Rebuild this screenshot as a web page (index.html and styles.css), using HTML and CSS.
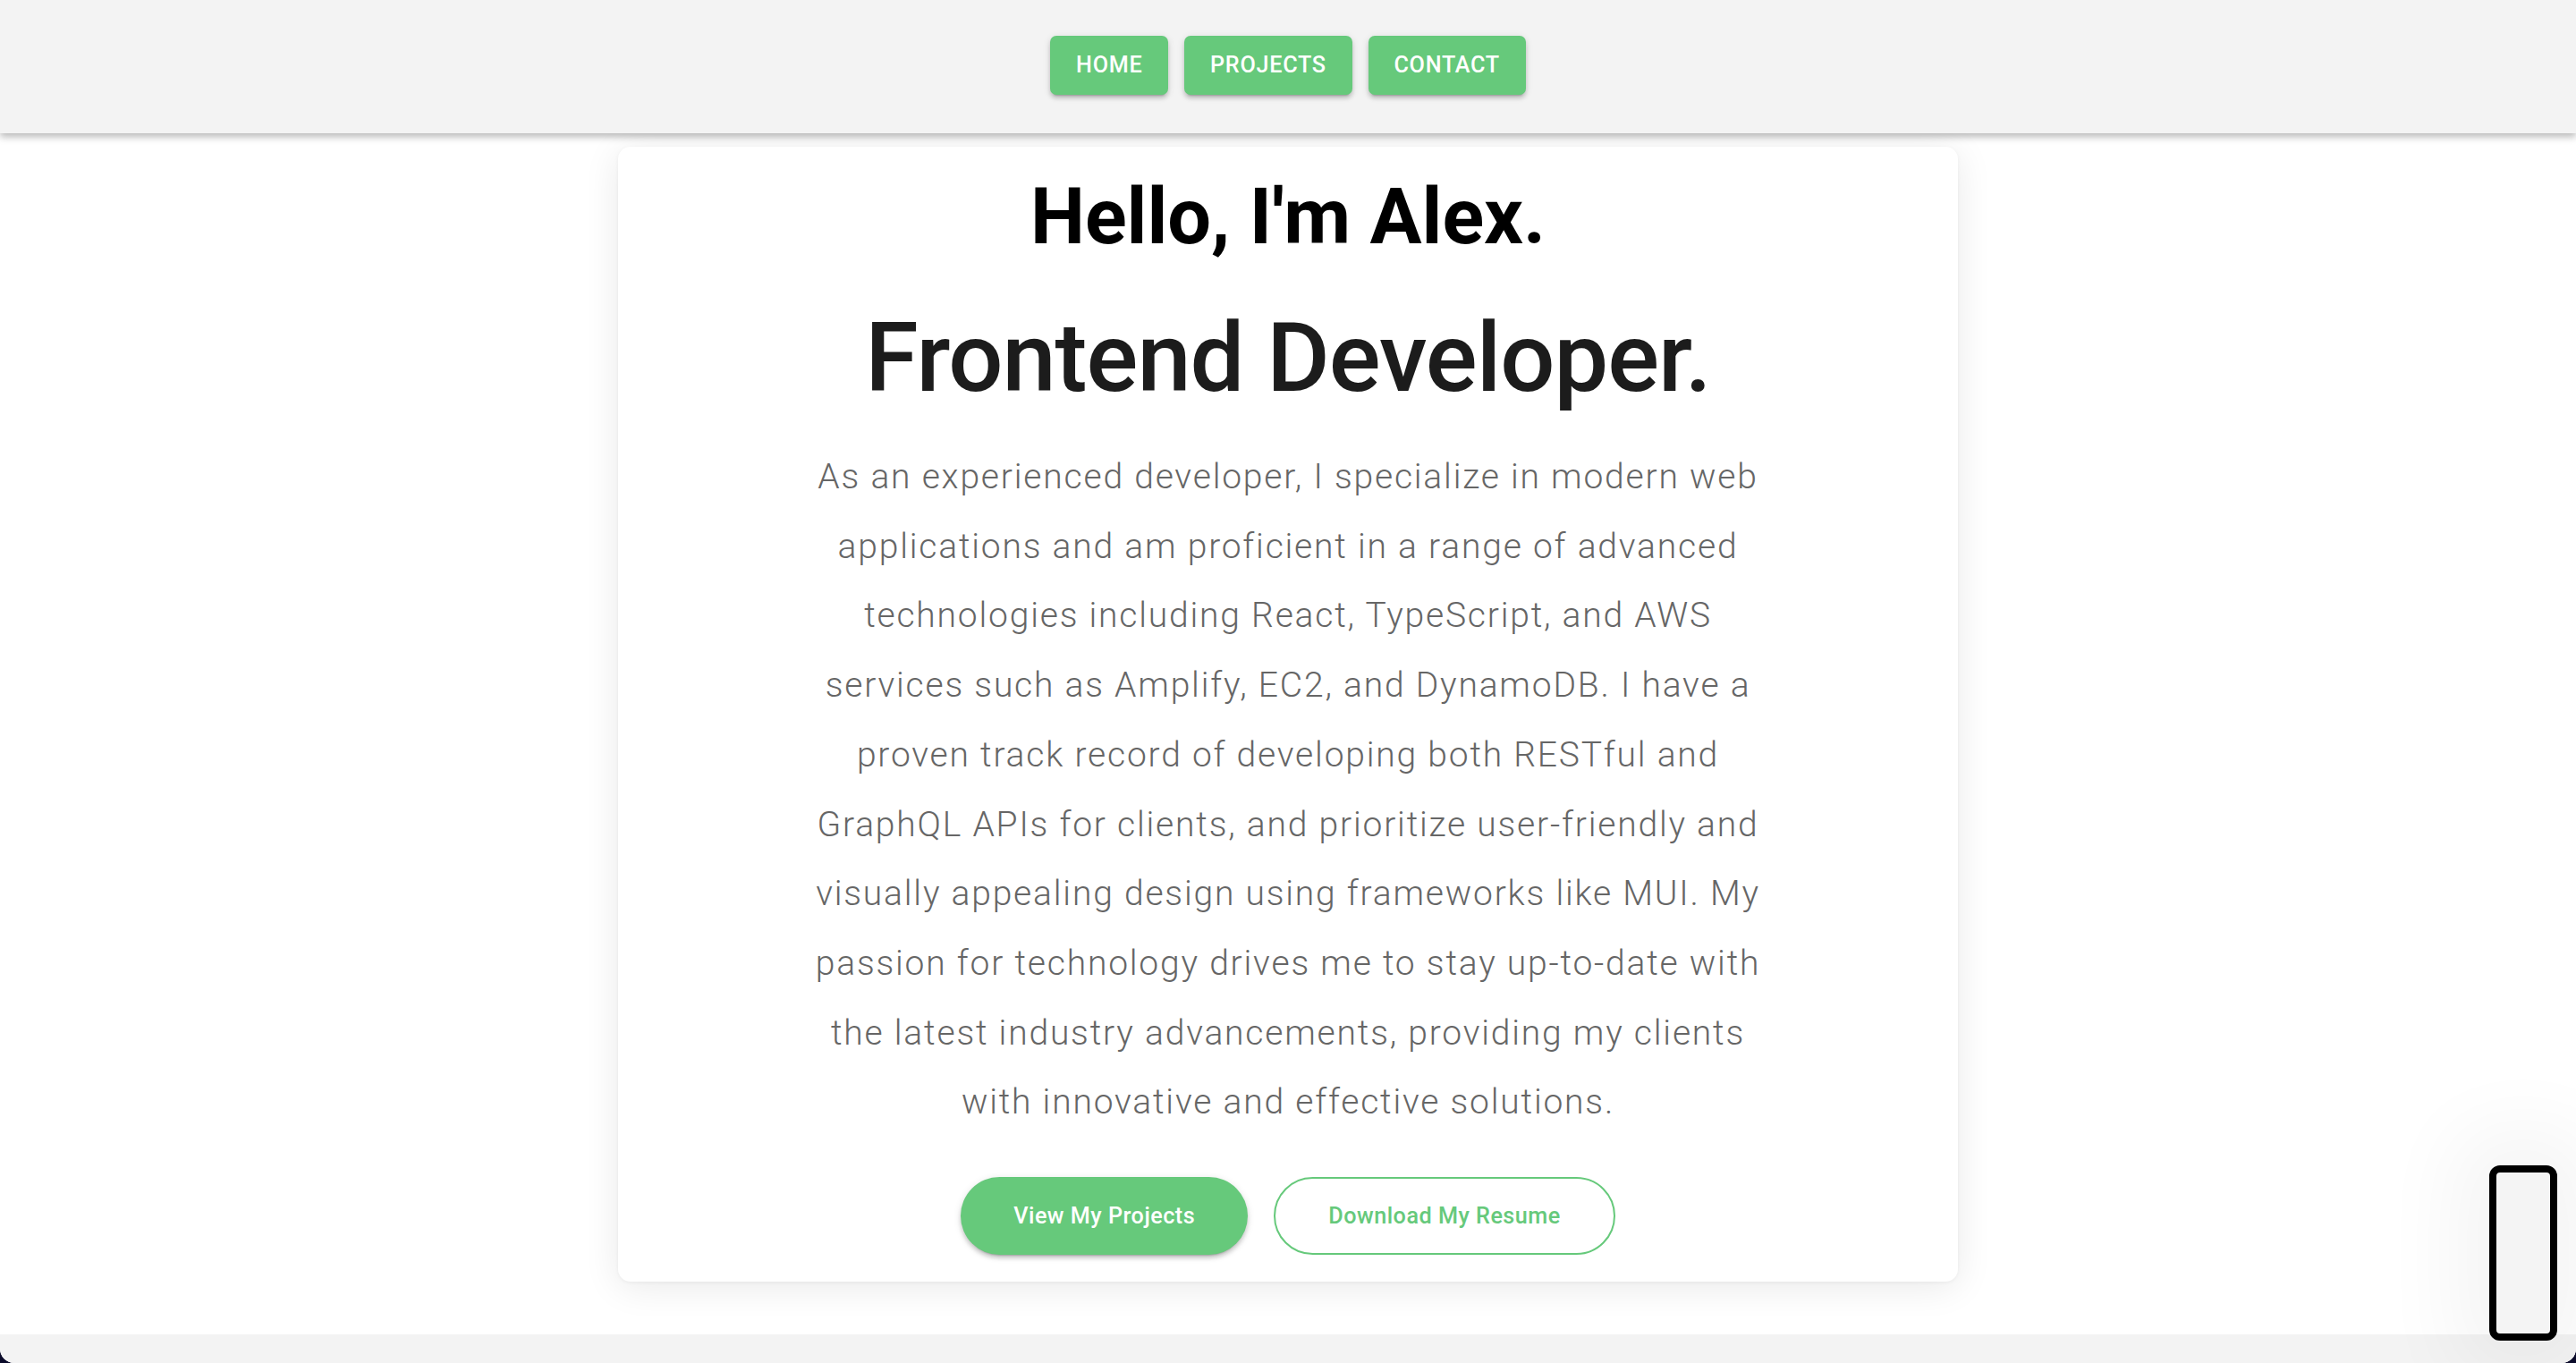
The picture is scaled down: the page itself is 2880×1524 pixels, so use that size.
FILE: index.html
```html
<!DOCTYPE html>
<html lang="en">
<head>
<meta charset="utf-8">
<title>Alex - Frontend Developer</title>
<link rel="stylesheet" href="styles.css">
</head>
<body>
<div class="window">
  <header class="topbar">
    <nav class="nav">
      <a class="nav-btn" href="#">Home</a>
      <a class="nav-btn" href="#">Projects</a>
      <a class="nav-btn" href="#">Contact</a>
    </nav>
  </header>
  <main class="main">
    <section class="card">
      <h1 class="hello">Hello, I'm Alex.</h1>
      <h2 class="role">Frontend Developer.</h2>
      <p class="intro">As an experienced developer, I specialize in modern web applications and am proficient in a range of advanced technologies including React, TypeScript, and AWS services such as Amplify, EC2, and DynamoDB. I have a proven track record of developing both RESTful and GraphQL APIs for clients, and prioritize user-friendly and visually appealing design using frameworks like MUI. My passion for technology drives me to stay up-to-date with the latest industry advancements, providing my clients with innovative and effective solutions.</p>
      <div class="actions">
        <a class="pill pill-filled" href="#">View My Projects</a>
        <a class="pill pill-outline" href="#">Download My Resume</a>
      </div>
    </section>
  </main>
  <footer class="bottom-strip"></footer>
  <div class="floater"></div>
</div>
</body>
</html>
```

FILE: styles.css
```css
html, body {
  margin: 0;
  padding: 0;
}
body {
  background: #0b0b2a;
  font-family: Roboto, "Liberation Sans", Arial, sans-serif;
}
.window {
  position: relative;
  height: 1524px;
  background: #ffffff;
  border-radius: 0 0 16px 16px;
  overflow: hidden;
  display: flex;
  flex-direction: column;
}
.topbar {
  height: 149px;
  box-sizing: border-box;
  padding-top: 40px;
  background: #f3f3f3;
  box-shadow: 0 4px 8px rgba(0,0,0,0.28);
  position: relative;
  z-index: 2;
  flex: none;
}
.nav {
  display: flex;
  justify-content: center;
  gap: 18px;
}
.nav-btn {
  display: inline-block;
  background: #66c97b;
  color: #ffffff;
  text-decoration: none;
  text-transform: uppercase;
  font-weight: 500;
  font-size: 25.2px;
  line-height: 44px;
  letter-spacing: 0.72px;
  padding: 10.8px 28.8px;
  border-radius: 7px;
  box-shadow: 0 5px 2px -4px rgba(0,0,0,0.2), 0 4px 4px 0 rgba(0,0,0,0.14), 0 2px 9px 0 rgba(0,0,0,0.12);
}
.main {
  flex: 1;
  display: flex;
  justify-content: center;
  align-items: flex-start;
  padding-top: 15px;
}
.card {
  width: 1498px;
  box-sizing: border-box;
  padding: 28px 28px 30px;
  background: #ffffff;
  border-radius: 14px;
  box-shadow: 0 6px 40px rgba(0,0,0,0.09), 0 1px 4px rgba(0,0,0,0.05);
  text-align: center;
}
.hello {
  margin: 0 0 42px;
  font-size: 86.4px;
  line-height: 101px;
  font-weight: 700;
  color: #000000;
}
.role {
  margin: 0 0 30px;
  font-size: 108px;
  line-height: 130px;
  font-weight: 500;
  letter-spacing: -1px;
  color: #1c1c1c;
}
.intro {
  margin: 0 auto 44px;
  max-width: 1080px;
  font-size: 39px;
  line-height: 77.7px;
  font-weight: 300;
  letter-spacing: 1.8px;
  color: #666666;
}
.actions {
  display: flex;
  justify-content: center;
  gap: 29px;
}
.pill {
  display: inline-block;
  text-decoration: none;
  font-size: 25.2px;
  font-weight: 500;
  line-height: 44px;
  letter-spacing: 0.5px;
  border-radius: 50px;
}
.pill-filled {
  background: #66c97b;
  color: #ffffff;
  padding: 21.6px 59px;
  box-shadow: 0 5px 2px -4px rgba(0,0,0,0.2), 0 4px 4px 0 rgba(0,0,0,0.14), 0 2px 9px 0 rgba(0,0,0,0.12);
}
.pill-outline {
  color: #66c97b;
  background: #ffffff;
  border: 2px solid #66c97b;
  padding: 19.6px 59px;
}
.bottom-strip {
  height: 32px;
  flex: none;
  background: #f3f3f3;
}
.floater {
  position: absolute;
  right: 21px;
  bottom: 25px;
  width: 76px;
  height: 196px;
  box-sizing: border-box;
  border: 8px solid #000000;
  border-radius: 12px;
  background: #f4f4f4;
  box-shadow: 0 0 90px 40px rgba(0,0,0,0.045);
}
```
